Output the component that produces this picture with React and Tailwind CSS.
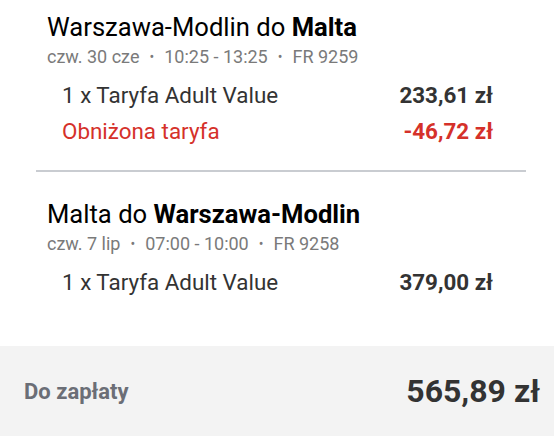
const Flight = ({ from, to, meta, items }) => (
  <div className="pl-[11px] pr-[33px]">
    <h3 className="text-[25.6px] leading-[30px] text-black">
      {from} do <span className="font-bold">{to}</span>
    </h3>
    <div className="flex items-center text-[18px] leading-[24px] text-[#7a7a7a] mt-[3px]">
      {meta.map((m, i) => (
        <span key={i} className="flex items-center">
          {i > 0 && <span className="mx-[10px] text-[14px]">•</span>}
          {m}
        </span>
      ))}
    </div>
    <div className="mt-[12px] pl-[15px] flex flex-col gap-[8px]">
      {items.map((it, i) => (
        <div
          key={i}
          className={`flex justify-between text-[22.4px] leading-[28px] ${it.red ? 'text-[#d5312a]' : 'text-[#333]'}`}
        >
          <span>{it.label}</span>
          <span className="font-bold">{it.price}</span>
        </div>
      ))}
    </div>
  </div>
);

const App = () => {
  return (
    <div className="w-[554px] h-[436px] bg-white flex flex-col font-['Roboto',sans-serif] overflow-hidden">
      <div className="pl-[36px] pr-[28px] pt-[12px]">
        <Flight
          from="Warszawa-Modlin"
          to="Malta"
          meta={['czw. 30 cze', '10:25 - 13:25', 'FR 9259']}
          items={[
            { label: '1 x Taryfa Adult Value', price: '233,61 zł' },
            { label: 'Obniżona taryfa', price: '-46,72 zł', red: true },
          ]}
        />
        <div className="mt-[25px] mb-[27px] h-[2px] bg-[#c9ccd1]" />
        <Flight
          from="Malta"
          to="Warszawa-Modlin"
          meta={['czw. 7 lip', '07:00 - 10:00', 'FR 9258']}
          items={[{ label: '1 x Taryfa Adult Value', price: '379,00 zł' }]}
        />
      </div>
      <div className="mt-auto h-[90px] bg-[#f3f3f3] flex items-center justify-between pl-[24px] pr-[14px]">
        <span className="text-[22px] font-bold text-[#6b6e76]">Do zapłaty</span>
        <span className="text-[32px] font-bold text-[#333]">565,89 zł</span>
      </div>
    </div>
  );
};

export default App;
